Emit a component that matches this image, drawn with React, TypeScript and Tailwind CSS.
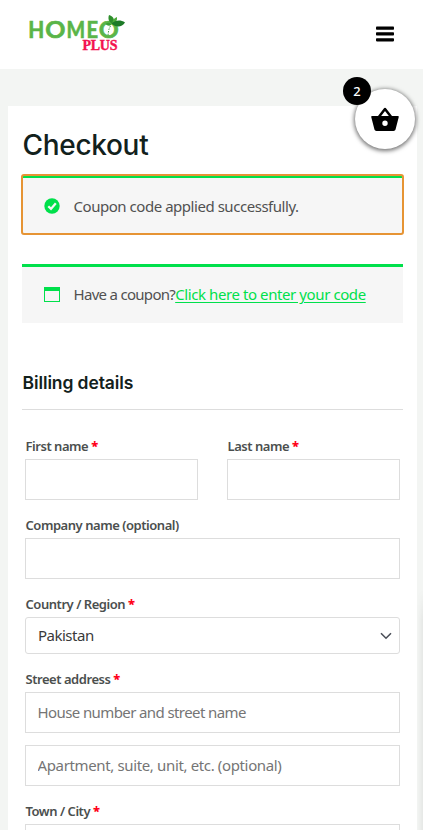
import type { ReactNode } from "react";

const BODY = "font-['Noto_Sans','Open_Sans',sans-serif]";

function Logo() {
  return (
    <svg width="100" height="40" viewBox="0 0 100 40" aria-label="Homeo Plus">
      <g
        fill="#5ab548"
        stroke="#5ab548"
        strokeWidth="0.6"
        fontFamily="Lato, sans-serif"
        fontWeight="700"
        fontSize="22.500"
      >
        <text x="2.300" y="23.800" textLength="16" lengthAdjust="spacingAndGlyphs">H</text>
        <text x="19.300" y="23.800" textLength="20.200" lengthAdjust="spacingAndGlyphs">O</text>
        <text x="40.600" y="23.800" textLength="18.600" lengthAdjust="spacingAndGlyphs">M</text>
        <text x="60.600" y="23.800" textLength="11.600" lengthAdjust="spacingAndGlyphs">E</text>
        <text x="72.700" y="23.800" textLength="20" lengthAdjust="spacingAndGlyphs">O</text>
      </g>
      <text
        x="56.500"
        y="36"
        fill="#f3124f"
        stroke="#f3124f"
        strokeWidth="0.4"
        fontFamily="Liberation Serif, serif"
        fontWeight="700"
        fontSize="14"
        textLength="35"
      >
        PLUS
      </text>
      <path d="M84.500 12c-2 3-2 6-2.500 9" fill="none" stroke="#2f8f2c" strokeWidth="0.900" strokeDasharray="1.500 1.200" />
      <path d="M83 1c4 1 6 4 4.500 9.500C83 8.500 81.500 5 83 1z" fill="#2f8f2c" />
      <path d="M91 3c.5 3-1 6-4.500 7.500C86 7 87.500 4.500 91 3z" fill="#4cab3a" />
      <path d="M85.500 9.500c4-3.500 9-4 13.500-1-3 4.800-9 5.500-13.500 1z" fill="#1d7a27" />
      <path d="M85.500 10.500c-2-2.200-4-2.200-6-.5 2 2 4 2.300 6 .5z" fill="#3c9f34" />
    </svg>
  );
}

function BasketIcon() {
  return (
    <svg width="28" height="25" viewBox="0 0 28 25">
      <path d="M7.800 10 14 2l6.200 8" fill="none" stroke="#000" strokeWidth="2.500" strokeLinejoin="round" />
      <path
        fillRule="evenodd"
        d="M1.300 9h25.400c.8 0 1.200.5 1 1.300L24.600 22.300c-.3 1.100-1 1.700-2.100 1.700H5.500c-1.100 0-1.800-.6-2.100-1.700L.3 10.300C.1 9.500.5 9 1.300 9zm12.700 4.600a2.700 2.700 0 1 0 0 5.400 2.700 2.700 0 0 0 0-5.400z"
      />
    </svg>
  );
}

function CheckIcon() {
  return (
    <svg width="16" height="16" viewBox="0 0 16 16">
      <circle cx="8" cy="8" r="7.700" fill="#00e04b" />
      <path d="m4.300 8.200 2.700 2.700 4.800-5.600" fill="none" stroke="#f6f6f6" strokeWidth="2.300" />
    </svg>
  );
}

function CouponIcon() {
  return (
    <svg width="16" height="15" viewBox="0 0 16 15">
      <rect x="0.500" y="0.500" width="15" height="14" fill="none" stroke="#00e04b" />
      <rect width="16" height="4" fill="#00e04b" />
    </svg>
  );
}

function Notice({ icon, children, className = "" }: { icon: ReactNode; children: ReactNode; className?: string }) {
  return (
    <div className={`flex h-[59px] items-center border-t-3 border-[#00e04b] bg-[#f6f6f6] pl-[22px] text-[15px] whitespace-nowrap text-[#515151] ${className}`}>
      <span className="mr-[13.5px] w-4 shrink-0">{icon}</span>
      {children}
    </div>
  );
}

function Label({ children, required, className = "" }: { children: ReactNode; required?: boolean; className?: string }) {
  return (
    <label className={`block h-[25px] pl-[0.5px] text-[13px] leading-[25px] font-semibold tracking-[-0.46px] whitespace-nowrap text-[#4b4f4e] ${className}`}>
      {children}
      {required && <span className="font-extrabold text-[#ff0018]"> *</span>}
    </label>
  );
}

function Input({ placeholder, className = "" }: { placeholder?: string; className?: string }) {
  return (
    <input
      placeholder={placeholder}
      className={`block h-[41px] w-full border border-[#dddddd] bg-white px-[11.5px] pb-0.5 text-[15px] placeholder:text-[#757575] ${className}`}
    />
  );
}

export default function App() {
  return (
    <div className={`relative h-[830px] w-[423px] overflow-hidden bg-[#f3f5f3] ${BODY}`}>
      <header className="flex h-[69px] items-start justify-between bg-white pr-[29px] pl-[26px]">
        <div className="pt-3.5">
          <Logo />
        </div>
        <button className="mt-[26px]" aria-label="Menu">
          <svg width="18" height="16" viewBox="0 0 18 16">
            <rect y="0.500" width="18" height="3.200" rx="0.800" />
            <rect y="6.300" width="18" height="3.200" rx="0.800" />
            <rect y="12.200" width="18" height="3.200" rx="0.800" />
          </svg>
        </button>
      </header>

      <main className="mt-[37px] mr-1.5 ml-2 h-[740px] bg-white px-3.5">
        <h1 className="h-[69px] pt-[18.5px] pl-[0.5px] font-[Inter,sans-serif] text-[28px] leading-10 font-[450] tracking-[-0.3px] text-[#12211c]">
          Checkout
        </h1>

        <div className="rounded-[2px] outline-2 -outline-offset-1 outline-[#e69434]">
          <Notice icon={<CheckIcon />}>
            <span className="tracking-[-0.46px]">Coupon code applied successfully.</span>
          </Notice>
        </div>

        <div className="mt-[30px]">
          <Notice icon={<CouponIcon />} className="pb-px">
            <span className="tracking-[-0.7px]">Have a coupon?</span>
            <a className="tracking-[-0.41px] text-[#00e04b] underline underline-offset-2">Click here to enter your code</a>
          </Notice>
        </div>

        <h3 className="mt-[42px] h-[45px] border-b border-[#dddddd] pt-1 pl-[0.5px] font-[Inter,sans-serif] text-[17.5px] leading-[28px] font-semibold tracking-[-0.1px] text-[#12211c]">
          Billing details
        </h3>

        <form className="mt-6 px-[3px]">
          <div className="flex gap-[29px]">
            <div className="w-[173px]">
              <Label required>First name</Label>
              <Input />
            </div>
            <div className="w-[173px]">
              <Label required>Last name</Label>
              <Input />
            </div>
          </div>

          <Label className="mt-[13px]">Company name (optional)</Label>
          <Input />

          <Label className="mt-[13px]" required>Country / Region</Label>
          <div className="flex h-[37px] items-center justify-between rounded-[3px] border border-[#dddddd] pr-[7px] pl-3 text-[15px] tracking-[-0.5px] text-[#3a3a3a]">
            <span>Pakistan</span>
            <svg width="12" height="8" viewBox="0 0 12 8">
              <path d="m1 1.200 5 5 5-5" fill="none" stroke="#4b4f58" strokeWidth="1.600" />
            </svg>
          </div>

          <Label className="mt-[13px]" required>Street address</Label>
          <Input placeholder="House number and street name" className="tracking-[-0.6px]" />
          <Input placeholder="Apartment, suite, unit, etc. (optional)" className="mt-3 tracking-[-0.36px]" />

          <Label className="mt-[13px]" required>Town / City</Label>
          <Input />
        </form>
      </main>

      {/* shadow of the off-canvas cart */}
      <div className="absolute top-[590px] right-0 h-60 w-1.5 bg-linear-to-r from-transparent to-black/5 [mask-image:linear-gradient(to_bottom,transparent,black_30px)]" />

      <button
        className="absolute top-[89px] left-[355px] flex size-[60px] items-center justify-center rounded-full bg-white pt-px shadow-[0_1px_4px_1px_rgba(0,0,0,0.55)]"
        aria-label="Cart"
      >
        <BasketIcon />
        <span className="absolute -top-3 -left-3 flex size-7 items-center justify-center rounded-full bg-black pt-px text-[13px] font-medium text-white">
          2
        </span>
      </button>
    </div>
  );
}
